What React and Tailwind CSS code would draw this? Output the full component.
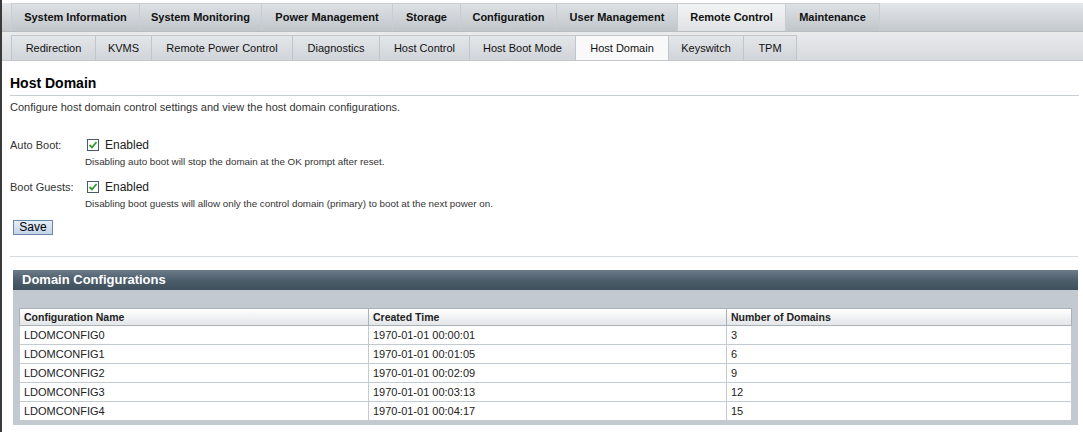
import React from 'react';

const mainTabs = [
  { label: 'System Information', w: 129 },
  { label: 'System Monitoring', w: 122 },
  { label: 'Power Management', w: 131 },
  { label: 'Storage', w: 68 },
  { label: 'Configuration', w: 96 },
  { label: 'User Management', w: 121 },
  { label: 'Remote Control', w: 108, active: true },
  { label: 'Maintenance', w: 94 },
];

const subTabs = [
  { label: 'Redirection', w: 85 },
  { label: 'KVMS', w: 56 },
  { label: 'Remote Power Control', w: 141 },
  { label: 'Diagnostics', w: 87 },
  { label: 'Host Control', w: 90 },
  { label: 'Host Boot Mode', w: 106 },
  { label: 'Host Domain', w: 93, active: true },
  { label: 'Keyswitch', w: 75 },
  { label: 'TPM', w: 53 },
];

const configs = [
  { name: 'LDOMCONFIG0', time: '1970-01-01 00:00:01', count: '3' },
  { name: 'LDOMCONFIG1', time: '1970-01-01 00:01:05', count: '6' },
  { name: 'LDOMCONFIG2', time: '1970-01-01 00:02:09', count: '9' },
  { name: 'LDOMCONFIG3', time: '1970-01-01 00:03:13', count: '12' },
  { name: 'LDOMCONFIG4', time: '1970-01-01 00:04:17', count: '15' },
];

const Check = () => (
  <span className="inline-flex w-[12px] h-[12px] border border-[#4a5a6a] bg-white items-center justify-center">
    <svg width="10" height="10" viewBox="0 0 10 10">
      <path d="M1.5 5 L4 7.5 L8.5 2" stroke="#2e9a2e" strokeWidth="1.8" fill="none" />
    </svg>
  </span>
);

const App = () => {
  return (
    <div className="w-[1083px] h-[432px] bg-white flex text-[#222] overflow-hidden" style={{ fontFamily: '"Liberation Sans", Arial, sans-serif' }}>
      <div className="w-[2px] bg-[#3a3a3a] shrink-0" />
      <div className="flex-1 flex flex-col">
        {/* main tabs */}
        <div className="mt-[3px] h-[29px] pl-[9px] flex bg-gradient-to-b from-[#e4e7ea] to-[#c4c9ce] border-b border-[#b8bdc2]">
          {mainTabs.map(t => (
            <div
              key={t.label}
              style={{ width: t.w }}
              className={`flex items-center justify-center text-[11px] font-bold text-[#111] border-r border-t border-[#c9cdd1] ${t.label === 'System Information' ? 'border-l' : ''} ${t.active ? 'bg-gradient-to-b from-[#f2f3f4] to-[#dfe2e5]' : 'bg-gradient-to-b from-[#dde1e4] to-[#c1c6cb]'}`}
            >
              {t.label}
            </div>
          ))}
        </div>
        {/* sub tabs */}
        <div className="h-[29px] pt-[3px] pl-[9px] flex bg-gradient-to-b from-[#e9ebed] to-[#d7dade] border-b border-[#c4c8cc]">
          {subTabs.map((t, i) => (
            <div
              key={t.label}
              style={{ width: t.w }}
              className={`flex items-center justify-center text-[11px] text-[#111] border-r border-t border-[#c2c6ca] ${i === 0 ? 'border-l' : ''} ${t.active ? 'bg-[#f9f9f9]' : 'bg-gradient-to-b from-[#e4e7ea] to-[#d0d4d8]'}`}
            >
              {t.label}
            </div>
          ))}
        </div>

        <div className="pl-[8px] pr-[4px]">
          <h1 className="mt-[13px] text-[14px] font-bold text-black leading-[18px] pb-[3px] border-b border-[#c6cdd4]">Host Domain</h1>
          <p className="mt-[3px] text-[11px] text-[#333] leading-[16px]">Configure host domain control settings and view the host domain configurations.</p>

          <div className="mt-[22px] flex">
            <div className="w-[77px] text-[11px] text-[#333] leading-[14px] pt-[1px]">Auto Boot:</div>
            <div>
              <div className="flex items-center gap-[6px] h-[14px] mt-[1px]">
                <Check />
                <span className="text-[12px] text-[#222]">Enabled</span>
              </div>
              <div className="mt-[4px] text-[9.8px] text-[#333] leading-[12px] -ml-[2px]">Disabling auto boot will stop the domain at the OK prompt after reset.</div>
            </div>
          </div>

          <div className="mt-[11px] flex">
            <div className="w-[77px] text-[11px] text-[#333] leading-[14px] pt-[1px]">Boot Guests:</div>
            <div>
              <div className="flex items-center gap-[6px] h-[14px] mt-[1px]">
                <Check />
                <span className="text-[12px] text-[#222]">Enabled</span>
              </div>
              <div className="mt-[4px] text-[9.8px] text-[#333] leading-[12px] -ml-[2px]">Disabling boot guests will allow only the control domain (primary) to boot at the next power on.</div>
            </div>
          </div>

          <button className="mt-[10px] ml-[3px] w-[40px] h-[15px] border border-[#6a86a8] bg-gradient-to-b from-[#e6eef8] to-[#c3d4e8] text-[12px] leading-[13px] text-black">Save</button>

          <div className="mt-[18px] mr-[1px] border-b border-[#d6dbe0]" />

          <div className="mt-[13px] ml-[3px] mr-[1px] flex flex-col">
            <div className="h-[20px] bg-gradient-to-b from-[#6c7b88] via-[#4d5e6c] to-[#3e4f5c] flex items-center pl-[9px] text-[13px] font-bold text-white">Domain Configurations</div>
            <div className="bg-[#c2c9d0] px-[6px] pt-[18px] pb-[4px]">
              <table className="w-full border-collapse bg-white text-[11px] text-[#222]">
                <thead>
                  <tr className="bg-gradient-to-b from-[#ffffff] to-[#e2e4e6] h-[17px]">
                    <th className="w-[349px] text-left font-bold pl-[4px] border border-[#a9b1b9] leading-[14px] text-[10.5px]">Configuration Name</th>
                    <th className="w-[358px] text-left font-bold pl-[4px] border border-[#a9b1b9] leading-[14px] text-[10.5px]">Created Time</th>
                    <th className="text-left font-bold pl-[4px] border border-[#a9b1b9] leading-[14px] text-[10.5px]">Number of Domains</th>
                  </tr>
                </thead>
                <tbody>
                  {configs.map(c => (
                    <tr key={c.name} className="h-[19px]">
                      <td className="pl-[4px] border border-[#c3cad1]">{c.name}</td>
                      <td className="pl-[4px] border border-[#c3cad1]">{c.time}</td>
                      <td className="pl-[4px] border border-[#c3cad1]">{c.count}</td>
                    </tr>
                  ))}
                </tbody>
              </table>
            </div>
          </div>
        </div>
      </div>
    </div>
  );
};

export default App;
